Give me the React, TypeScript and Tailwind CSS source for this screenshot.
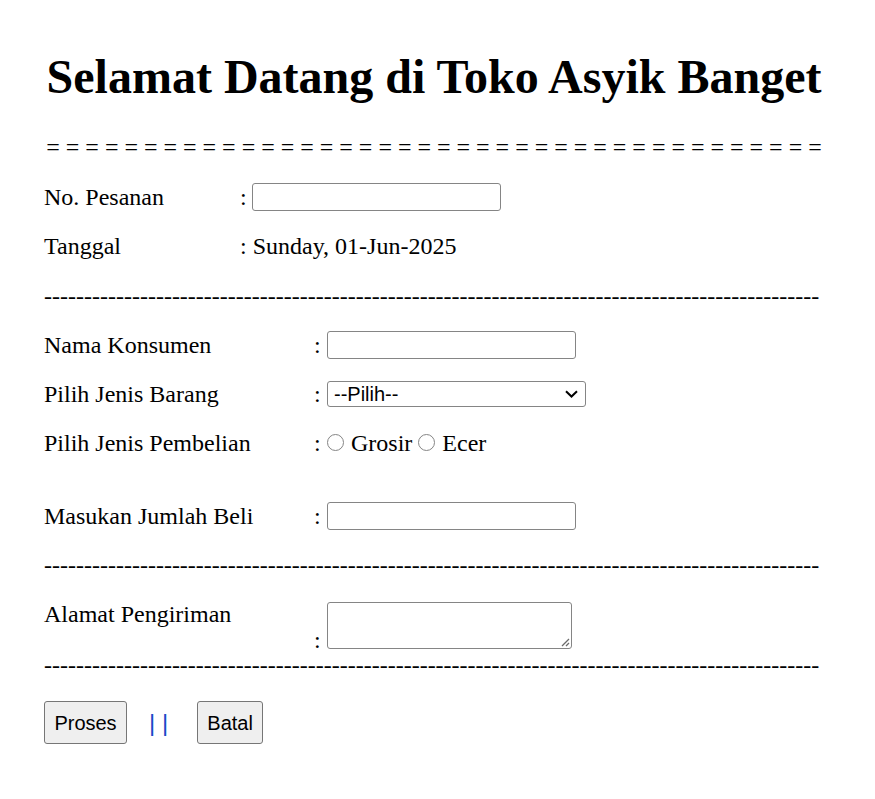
import React from "react";

const dashes = "-".repeat(97);
const equals = Array(40).fill("=").join(" ");

function TextBox({ w }: { w: string }) {
  return <div className={`${w} h-[28px] border border-[#858585] rounded-[3px] bg-white`} />;
}

function Radio() {
  return <span className="inline-block w-[17px] h-[17px] rounded-full border border-[#858585] bg-white" />;
}

export default function App() {
  return (
    <div className="w-[875px] min-h-[799px] bg-white text-black font-['Liberation_Serif','Times_New_Roman',serif] text-[24px] pl-[44px]">
      <div className="pt-[50px]">
        <h1 className="w-[780px] text-center text-[48px] font-bold leading-[54px]">
          Selamat Datang di Toko Asyik Banget
        </h1>
      </div>
      <div className="mt-[29px] w-[780px] text-center leading-[28px] whitespace-pre">{equals}</div>

      <div className="mt-[11px]">
        <div className="flex h-[49px] items-center">
          <span className="w-[196px]">No. Pesanan</span>
          <span className="w-[12px]">:</span>
          <TextBox w="w-[249px]" />
        </div>
        <div className="flex h-[49px] items-center">
          <span className="w-[196px]">Tanggal</span>
          <span className="whitespace-pre">: Sunday, 01-Jun-2025</span>
        </div>
      </div>

      <div className="mt-[12px] leading-[28px] whitespace-pre">{dashes}</div>

      <div className="mt-[10px]">
        <div className="flex h-[49px] items-center">
          <span className="w-[270px]">Nama Konsumen</span>
          <span className="w-[13px]">:</span>
          <TextBox w="w-[249px]" />
        </div>
        <div className="flex h-[49px] items-center">
          <span className="w-[270px]">Pilih Jenis Barang</span>
          <span className="w-[13px]">:</span>
          <div className="w-[259px] h-[26px] border border-[#858585] rounded-[3px] bg-white flex items-center justify-between pl-[6px] pr-[7px] font-['Liberation_Sans',Arial,sans-serif] text-[20px]">
            <span className="leading-[24px]">--Pilih--</span>
            <svg width="13" height="8" viewBox="0 0 13 8" fill="none">
              <path d="M1 1.2 L6.5 6.5 L12 1.2" stroke="#000" strokeWidth="2" />
            </svg>
          </div>
        </div>
        <div className="flex h-[49px] items-center">
          <span className="w-[270px]">Pilih Jenis Pembelian</span>
          <span className="w-[13px]">:</span>
          <Radio />
          <span className="ml-[7px]">Grosir</span>
          <span className="ml-[6px]"><Radio /></span>
          <span className="ml-[7px]">Ecer</span>
        </div>
        <div className="h-[24px]" />
        <div className="flex h-[49px] items-center">
          <span className="w-[270px]">Masukan Jumlah Beli</span>
          <span className="w-[13px]">:</span>
          <TextBox w="w-[249px]" />
        </div>
      </div>

      <div className="mt-[11px] leading-[28px] whitespace-pre">{dashes}</div>

      <div className="flex items-start">
        <span className="w-[270px] pt-[21px] leading-[28px]">Alamat Pengiriman</span>
        <div className="flex items-end pt-[23px]">
          <span className="w-[13px] leading-[18px]">:</span>
          <div className="relative w-[245px] h-[47px] border border-[#858585] rounded-[3px] bg-white">
            <svg className="absolute right-[1px] bottom-[1px]" width="10" height="10" viewBox="0 0 10 10">
              <path d="M9 2 L2 9 M9 6 L6 9" stroke="#6b6b6b" strokeWidth="1.3" />
            </svg>
          </div>
        </div>
      </div>

      <div className="mt-[2px] leading-[28px] whitespace-pre">{dashes}</div>

      <div className="mt-[22px] flex items-center font-['Liberation_Sans',Arial,sans-serif]">
        <div className="w-[83px] h-[43px] border border-[#767676] rounded-[3px] bg-[#efefef] flex items-center justify-center text-[20px]">
          Proses
        </div>
        <span className="ml-[22px] text-[24px] leading-[28px] text-[#1a47c7] whitespace-pre">| |</span>
        <div className="ml-[29px] w-[66px] h-[43px] border border-[#767676] rounded-[3px] bg-[#efefef] flex items-center justify-center text-[20px]">
          Batal
        </div>
      </div>
    </div>
  );
}
